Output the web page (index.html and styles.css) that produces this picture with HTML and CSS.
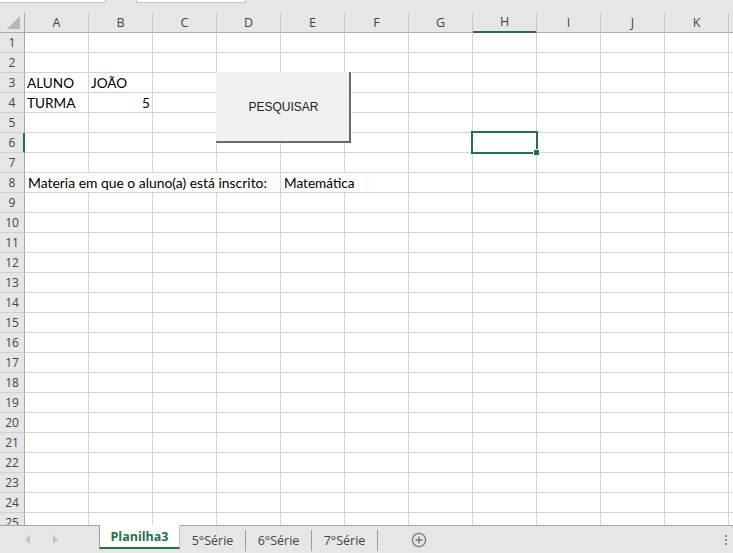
FILE: index.html
```html
<!DOCTYPE html>
<html>
<head>
<meta charset="utf-8">
<link rel="stylesheet" href="styles.css">
</head>
<body>
<div class="app">
  <div class="topbar">
    <div class="box box1"></div>
    <div class="box box2"></div>
  </div>
  <div class="sheet">
    <div class="row head">
      <div class="rh corner"><svg width="14" height="13" viewBox="0 0 14 13"><polygon points="13,0 13,13 0,13" fill="#b7b7b7"/></svg></div>
      <div class="c">A</div><div class="c">B</div><div class="c">C</div><div class="c">D</div><div class="c">E</div><div class="c">F</div><div class="c">G</div><div class="c sel">H</div><div class="c">I</div><div class="c">J</div><div class="c">K</div><div class="c x"></div>
    </div>
    <div class="row"><div class="rh">1</div><div class="c"></div><div class="c"></div><div class="c"></div><div class="c"></div><div class="c"></div><div class="c"></div><div class="c"></div><div class="c"></div><div class="c"></div><div class="c"></div><div class="c"></div><div class="c x"></div></div>
    <div class="row"><div class="rh">2</div><div class="c"></div><div class="c"></div><div class="c"></div><div class="c"></div><div class="c"></div><div class="c"></div><div class="c"></div><div class="c"></div><div class="c"></div><div class="c"></div><div class="c"></div><div class="c x"></div></div>
    <div class="row"><div class="rh">3</div><div class="c">ALUNO</div><div class="c">JOÃO</div><div class="c"></div><div class="c"></div><div class="c"></div><div class="c"></div><div class="c"></div><div class="c"></div><div class="c"></div><div class="c"></div><div class="c"></div><div class="c x"></div></div>
    <div class="row"><div class="rh">4</div><div class="c">TURMA</div><div class="c num">5</div><div class="c"></div><div class="c"></div><div class="c"></div><div class="c"></div><div class="c"></div><div class="c"></div><div class="c"></div><div class="c"></div><div class="c"></div><div class="c x"></div></div>
    <div class="row"><div class="rh">5</div><div class="c"></div><div class="c"></div><div class="c"></div><div class="c"></div><div class="c"></div><div class="c"></div><div class="c"></div><div class="c"></div><div class="c"></div><div class="c"></div><div class="c"></div><div class="c x"></div></div>
    <div class="row"><div class="rh rsel">6</div><div class="c"></div><div class="c"></div><div class="c"></div><div class="c"></div><div class="c"></div><div class="c"></div><div class="c"></div><div class="c"></div><div class="c"></div><div class="c"></div><div class="c"></div><div class="c x"></div></div>
    <div class="row"><div class="rh">7</div><div class="c"></div><div class="c"></div><div class="c"></div><div class="c"></div><div class="c"></div><div class="c"></div><div class="c"></div><div class="c"></div><div class="c"></div><div class="c"></div><div class="c"></div><div class="c x"></div></div>
    <div class="row"><div class="rh">8</div><div class="c span4">Materia em que o aluno(a) está inscrito:</div><div class="c span2">Matemática</div><div class="c"></div><div class="c"></div><div class="c"></div><div class="c"></div><div class="c"></div><div class="c x"></div></div>
    <div class="row"><div class="rh">9</div><div class="c"></div><div class="c"></div><div class="c"></div><div class="c"></div><div class="c"></div><div class="c"></div><div class="c"></div><div class="c"></div><div class="c"></div><div class="c"></div><div class="c"></div><div class="c x"></div></div>
    <div class="row"><div class="rh">10</div><div class="c"></div><div class="c"></div><div class="c"></div><div class="c"></div><div class="c"></div><div class="c"></div><div class="c"></div><div class="c"></div><div class="c"></div><div class="c"></div><div class="c"></div><div class="c x"></div></div>
    <div class="row"><div class="rh">11</div><div class="c"></div><div class="c"></div><div class="c"></div><div class="c"></div><div class="c"></div><div class="c"></div><div class="c"></div><div class="c"></div><div class="c"></div><div class="c"></div><div class="c"></div><div class="c x"></div></div>
    <div class="row"><div class="rh">12</div><div class="c"></div><div class="c"></div><div class="c"></div><div class="c"></div><div class="c"></div><div class="c"></div><div class="c"></div><div class="c"></div><div class="c"></div><div class="c"></div><div class="c"></div><div class="c x"></div></div>
    <div class="row"><div class="rh">13</div><div class="c"></div><div class="c"></div><div class="c"></div><div class="c"></div><div class="c"></div><div class="c"></div><div class="c"></div><div class="c"></div><div class="c"></div><div class="c"></div><div class="c"></div><div class="c x"></div></div>
    <div class="row"><div class="rh">14</div><div class="c"></div><div class="c"></div><div class="c"></div><div class="c"></div><div class="c"></div><div class="c"></div><div class="c"></div><div class="c"></div><div class="c"></div><div class="c"></div><div class="c"></div><div class="c x"></div></div>
    <div class="row"><div class="rh">15</div><div class="c"></div><div class="c"></div><div class="c"></div><div class="c"></div><div class="c"></div><div class="c"></div><div class="c"></div><div class="c"></div><div class="c"></div><div class="c"></div><div class="c"></div><div class="c x"></div></div>
    <div class="row"><div class="rh">16</div><div class="c"></div><div class="c"></div><div class="c"></div><div class="c"></div><div class="c"></div><div class="c"></div><div class="c"></div><div class="c"></div><div class="c"></div><div class="c"></div><div class="c"></div><div class="c x"></div></div>
    <div class="row"><div class="rh">17</div><div class="c"></div><div class="c"></div><div class="c"></div><div class="c"></div><div class="c"></div><div class="c"></div><div class="c"></div><div class="c"></div><div class="c"></div><div class="c"></div><div class="c"></div><div class="c x"></div></div>
    <div class="row"><div class="rh">18</div><div class="c"></div><div class="c"></div><div class="c"></div><div class="c"></div><div class="c"></div><div class="c"></div><div class="c"></div><div class="c"></div><div class="c"></div><div class="c"></div><div class="c"></div><div class="c x"></div></div>
    <div class="row"><div class="rh">19</div><div class="c"></div><div class="c"></div><div class="c"></div><div class="c"></div><div class="c"></div><div class="c"></div><div class="c"></div><div class="c"></div><div class="c"></div><div class="c"></div><div class="c"></div><div class="c x"></div></div>
    <div class="row"><div class="rh">20</div><div class="c"></div><div class="c"></div><div class="c"></div><div class="c"></div><div class="c"></div><div class="c"></div><div class="c"></div><div class="c"></div><div class="c"></div><div class="c"></div><div class="c"></div><div class="c x"></div></div>
    <div class="row"><div class="rh">21</div><div class="c"></div><div class="c"></div><div class="c"></div><div class="c"></div><div class="c"></div><div class="c"></div><div class="c"></div><div class="c"></div><div class="c"></div><div class="c"></div><div class="c"></div><div class="c x"></div></div>
    <div class="row"><div class="rh">22</div><div class="c"></div><div class="c"></div><div class="c"></div><div class="c"></div><div class="c"></div><div class="c"></div><div class="c"></div><div class="c"></div><div class="c"></div><div class="c"></div><div class="c"></div><div class="c x"></div></div>
    <div class="row"><div class="rh">23</div><div class="c"></div><div class="c"></div><div class="c"></div><div class="c"></div><div class="c"></div><div class="c"></div><div class="c"></div><div class="c"></div><div class="c"></div><div class="c"></div><div class="c"></div><div class="c x"></div></div>
    <div class="row"><div class="rh">24</div><div class="c"></div><div class="c"></div><div class="c"></div><div class="c"></div><div class="c"></div><div class="c"></div><div class="c"></div><div class="c"></div><div class="c"></div><div class="c"></div><div class="c"></div><div class="c x"></div></div>
    <div class="row"><div class="rh">25</div><div class="c"></div><div class="c"></div><div class="c"></div><div class="c"></div><div class="c"></div><div class="c"></div><div class="c"></div><div class="c"></div><div class="c"></div><div class="c"></div><div class="c"></div><div class="c x"></div></div>

    <div class="button">PESQUISAR</div>
    <div class="selection"><div class="handle"></div></div>
  </div>
  <div class="tabbar">
    <div class="nav">
      <svg class="arrow" width="6" height="9" viewBox="0 0 6 9"><polygon points="5,0 5,9 0,4.5" fill="#c4c4c4"/></svg>
      <svg class="arrow" width="6" height="9" viewBox="0 0 6 9"><polygon points="0,0 0,9 5,4.5" fill="#c4c4c4"/></svg>
    </div>
    <div class="tab active">Planilha3</div>
    <div class="tab">5°Série</div>
    <div class="tab">6°Série</div>
    <div class="tab">7°Série</div>
    <div class="add"><svg width="16" height="16" viewBox="0 0 16 16"><circle cx="8" cy="8" r="6.6" fill="none" stroke="#7a7a7a" stroke-width="1.3"/><path d="M8 4.5v7M4.5 8h7" stroke="#7a7a7a" stroke-width="1.5"/></svg></div>
    <div class="spacer"></div>
    <div class="dots"><i></i><i></i><i></i></div>
  </div>
</div>
</body>
</html>
```
FILE: styles.css
```css
html, body {
  margin: 0;
  padding: 0;
}
body {
  width: 733px;
  height: 553px;
  overflow: hidden;
  background: #e6e6e6;
  font-family: "Liberation Sans", Arial, sans-serif;
}
.app {
  display: flex;
  flex-direction: column;
  width: 733px;
  height: 553px;
}
.topbar {
  height: 13px;
  display: flex;
  align-items: flex-start;
  flex: none;
}
.box {
  height: 3px;
  box-sizing: border-box;
  background: #fff;
  border: 1px solid #c6c6c6;
  border-top: none;
}
.box1 {
  width: 106px;
  border-left: none;
}
.box2 {
  width: 110px;
  margin-left: 30px;
}
.sheet {
  position: relative;
  height: 512px;
  overflow: hidden;
  background: #fff;
  flex: none;
}
.row {
  display: flex;
  height: 20px;
}
.rh {
  width: 25px;
  flex: none;
  box-sizing: border-box;
  background: #e6e6e6;
  border-right: 1px solid #ababab;
  border-bottom: 1px solid #d0d0d0;
  font-family: "Open Sans", "Liberation Sans", sans-serif;
  font-size: 12px;
  color: #444;
  text-align: center;
  line-height: 19px;
}
.rh.rsel {
  border-right: 2px solid #217346;
  padding-left: 1px;
}
.c {
  width: 64px;
  flex: none;
  box-sizing: border-box;
  border-right: 1px solid #d4d4d4;
  border-bottom: 1px solid #d4d4d4;
  font-family: "Lato", "Liberation Sans", sans-serif;
  font-size: 13.6px;
  color: #000;
  line-height: 20px;
  padding: 0 2px;
  white-space: nowrap;
}
.c.x {
  width: 4px;
  padding: 0;
  border-right: none;
}
.c.num {
  text-align: right;
}
.span4 {
  width: 256px;
  padding-left: 3px;
  font-size: 13.9px;
}
.span2 {
  width: 128px;
  padding-left: 3px;
}
.head .rh,
.head .c {
  background: #e6e6e6;
  border-bottom: 1px solid #ababab;
  border-right: 1px solid #c6c6c6;
  font-family: "Open Sans", "Liberation Sans", sans-serif;
  font-size: 12.5px;
  color: #444;
  text-align: center;
  line-height: 19px;
}
.head .rh {
  border-right: 1px solid #ababab;
}
.head .c.x {
  border-right: none;
}
.corner {
  display: flex;
  align-items: flex-end;
  justify-content: flex-end;
  padding: 0 3px 3px 0;
}
.corner svg {
  display: block;
}
.head .c.sel {
  border-bottom: 2px solid #217346;
  line-height: 18px;
}
.button {
  position: absolute;
  left: 216px;
  top: 59px;
  width: 135px;
  height: 71px;
  box-sizing: border-box;
  background: #f0f0f0;
  border-right: 2px solid #696969;
  border-bottom: 2px solid #696969;
  display: flex;
  align-items: center;
  justify-content: center;
  padding-left: 2px;
  font-family: "Liberation Sans", Arial, sans-serif;
  font-size: 12px;
  color: #222;
}
.selection {
  position: absolute;
  left: 471px;
  top: 118px;
  width: 67px;
  height: 23px;
  box-sizing: border-box;
  border: 2px solid #217346;
}
.handle {
  position: absolute;
  right: -3px;
  bottom: -3px;
  width: 5px;
  height: 5px;
  background: #217346;
  border: 1px solid #fff;
  border-right: none;
  border-bottom: none;
}
.tabbar {
  height: 28px;
  box-sizing: border-box;
  border-top: 1px solid #a6a6a6;
  display: flex;
  align-items: stretch;
  flex: none;
  font-family: "Open Sans", "Liberation Sans", sans-serif;
  font-size: 12.5px;
  color: #444;
}
.nav {
  width: 99px;
  display: flex;
  align-items: center;
  gap: 22px;
  padding-left: 25px;
  box-sizing: border-box;
}
.arrow {
  display: block;
}
.tab {
  width: 66px;
  box-sizing: border-box;
  display: flex;
  align-items: center;
  justify-content: center;
  height: 21px;
  margin-top: 4px;
  border-right: 1px solid #9c9c9c;
}
.tab.active {
  width: 81px;
  height: 24px;
  margin-top: -1px;
  background: #fff;
  border-left: 1px solid #9c9c9c;
  border-right: 1px solid #c6c6c6;
  border-bottom: 2px solid #217346;
  color: #217346;
  font-weight: bold;
  padding-top: 1px;
}
.add {
  width: 82px;
  display: flex;
  align-items: center;
  justify-content: center;
}
.add svg {
  display: block;
}
.spacer {
  flex: 1;
}
.dots {
  width: 8px;
  display: flex;
  flex-direction: column;
  justify-content: center;
  gap: 2px;
}
.dots i {
  display: block;
  width: 2px;
  height: 2px;
  background: #8a8a8a;
}
```
